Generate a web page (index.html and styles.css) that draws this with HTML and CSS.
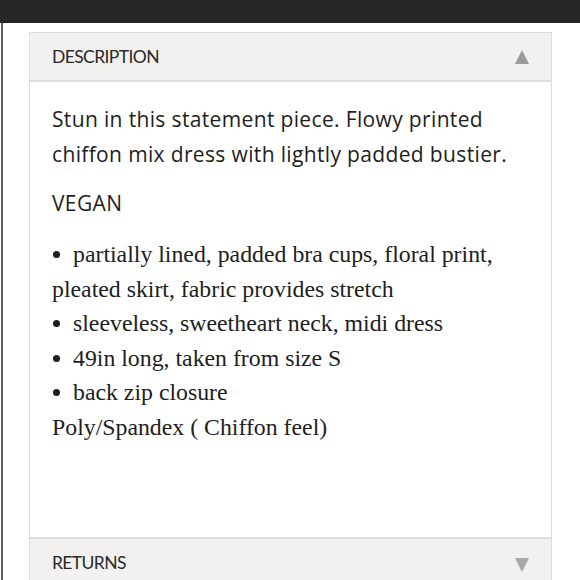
FILE: index.html
```html
<!DOCTYPE html>
<html>
<head>
<meta charset="utf-8">
<link rel="stylesheet" href="styles.css">
</head>
<body>
<div class="topbar"></div>
<div class="page">
  <div class="card">
    <div class="acc-head">
      <span class="acc-title">DESCRIPTION</span>
      <svg class="tri" width="14" height="14" viewBox="0 0 14 14"><polygon points="7,0 14,14 0,14" fill="#9b9b9b"/></svg>
    </div>
    <div class="acc-body">
      <p class="lead">Stun in this statement piece. Flowy printed chiffon mix dress with lightly padded bustier.</p>
      <p class="lead vegan">VEGAN</p>
      <div class="specs">
        <div class="spec"><span class="dot"></span>partially lined, padded bra cups, floral print, pleated skirt, fabric provides stretch</div>
        <div class="spec"><span class="dot"></span>sleeveless, sweetheart neck, midi dress</div>
        <div class="spec"><span class="dot"></span>49in long, taken from size S</div>
        <div class="spec"><span class="dot"></span>back zip closure</div>
        <div class="spec">Poly/Spandex ( Chiffon feel)</div>
      </div>
    </div>
    <div class="acc-head returns">
      <span class="acc-title">RETURNS</span>
      <svg class="tri" width="14" height="14" viewBox="0 0 14 14"><polygon points="0,0 14,0 7,14" fill="#a8a8a8"/></svg>
    </div>
  </div>
</div>
</body>
</html>
```
FILE: styles.css
```css
html, body {
  margin: 0;
  padding: 0;
  background: #ffffff;
  height: 580px;
  overflow: hidden;
}
.topbar {
  height: 23px;
  background: #262626;
}
.page {
  margin-left: 1px;
  border-left: 2px solid #5f5f5f;
  height: 557px;
  padding: 9px 0 0 26px;
  box-sizing: border-box;
}
.card {
  width: 523px;
  border: 1px solid #dddddd;
  box-sizing: border-box;
  font-family: "Open Sans", Lato, sans-serif;
}
.acc-head {
  height: 47px;
  background: #f2f1f0;
  border-bottom: 2px solid #dcdcdc;
  display: flex;
  align-items: center;
  justify-content: space-between;
  padding: 0 22px 0 22px;
}
.acc-head.returns {
  border-bottom: none;
  border-top: 2px solid #dcdcdc;
  height: 60px;
  align-items: flex-start;
  padding-top: 13px;
  box-sizing: border-box;
}
.acc-head.returns .tri {
  margin-top: 6px;
}
.acc-title {
  font-family: Lato, sans-serif;
  font-size: 17.5px;
  color: #2a2a2a;
  letter-spacing: -0.6px;
}
.tri {
  display: block;
}
.acc-body {
  background: #ffffff;
  padding: 20px 22px 0 22px;
  height: 455px;
  box-sizing: border-box;
}
.lead {
  margin: 0;
  font-size: 21px;
  line-height: 35px;
  color: #1e1e1e;
  letter-spacing: 0.35px;
}
.vegan {
  margin-top: 14px;
}
.specs {
  margin-top: 16px;
  font-family: "Liberation Serif", serif;
  font-size: 23.8px;
  line-height: 34.5px;
  color: #1e1e1e;
}
.dot {
  display: inline-block;
  width: 7px;
  height: 7px;
  border-radius: 50%;
  background: #1e1e1e;
  margin: 0 13px 0 1px;
  vertical-align: 4px;
}
```
